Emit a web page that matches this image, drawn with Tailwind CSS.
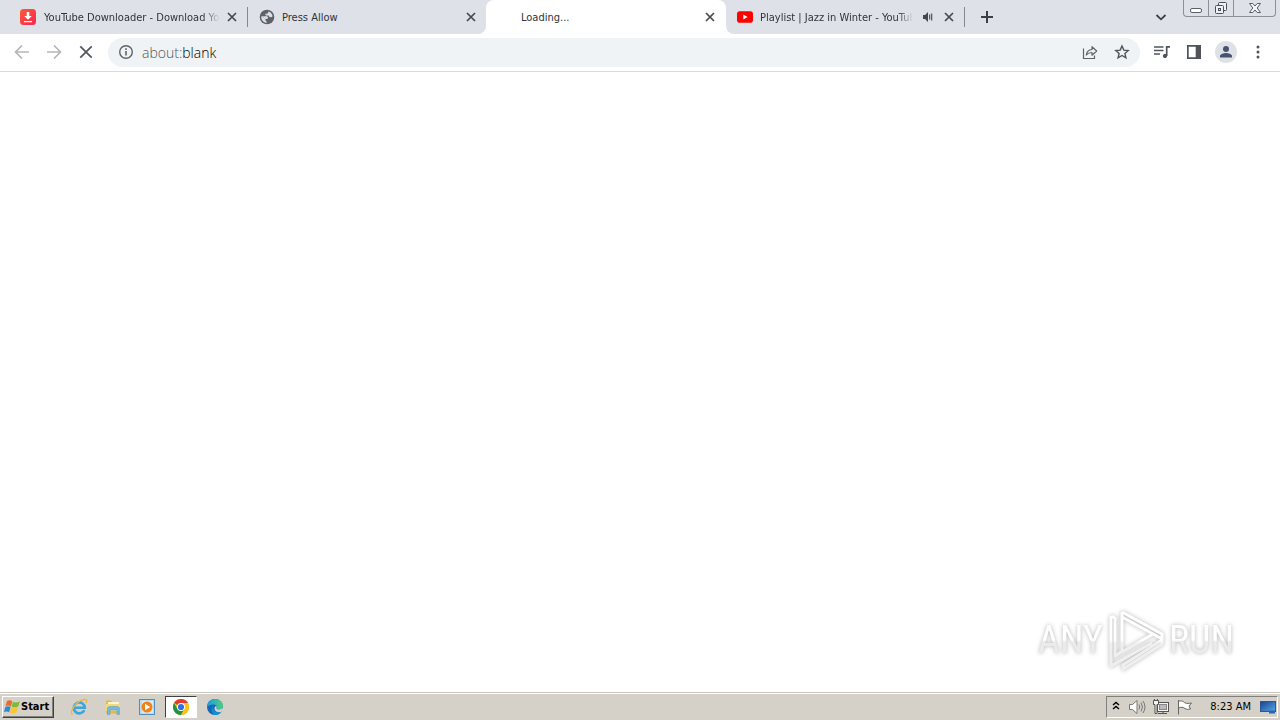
<!DOCTYPE html>
<html lang="en">
<head>
<meta charset="utf-8">
<title>Loading...</title>
<script src="https://cdn.jsdelivr.net/npm/@tailwindcss/browser@4"></script>
</head>
<body class="flex h-screen flex-col overflow-hidden bg-white font-['DejaVu_Sans_Condensed','DejaVu_Sans',sans-serif] text-[11px] text-[#303338]">

<header>
  <div class="flex h-[34px] bg-[#dee1e8] pl-2">
    <div role="tablist" class="flex min-w-0">
      <div role="tab" class="flex h-[34px] w-[240px] min-w-0 items-center pl-3">
        <svg class="mr-2 size-4 shrink-0" viewBox="0 0 16 16"><defs><linearGradient id="dl" x1="0" y1="0" x2="1" y2="1"><stop stop-color="#ff5a36"/><stop offset="1" stop-color="#f5254f"/></linearGradient></defs><rect width="16" height="16" rx="3.5" fill="url(#dl)"/><path d="M6.7 3h2.6v4h2.5L8 10.8 4.2 7h2.5zM4 12h8v1.3H4z" fill="#fff"/></svg>
        <span class="min-w-0 flex-1 overflow-hidden pt-0.5 whitespace-nowrap mask-r-from-90% mask-r-to-100%">YouTube Downloader - Download You</span>
        <button aria-label="Close tab" class="mr-[7px] ml-1 flex h-4 w-4 shrink-0 items-center justify-center"><svg class="size-4" viewBox="0 0 16 16" stroke="#45484c" stroke-width="1.7"><path d="M4 4l8 8M12 4l-8 8"/></svg></button>
        <i class="h-5 w-px bg-[#85898f]"></i>
      </div>
      <div role="tab" class="flex h-[34px] w-[238px] min-w-0 items-center gap-[7px] pr-[7px] pl-[11px]">
        <svg class="size-4 shrink-0" viewBox="0 0 16 16"><circle cx="8" cy="8" r="7.3" fill="#5f6368"/><path d="M9.300 2.600c2.300.5 3.900 2.300 4.300 4.600-.7.900-1.600 1.100-2.500.9-.8-.2-1.300-.8-1.300-1.700H7.300c-.5 0-.9-.4-.9-.9V4.700h1.500c.8 0 1.400-.6 1.400-1.400zM2.500 7l4 3.300v.9c0 .7.500 1.200 1.200 1.200v1.400C4.600 13.700 2.300 11.200 2.300 8zM3 7.200h4.400c1 0 1.600.6 1.600 1.400 0 .9-.7 1.500-1.600 1.500H6.500z" fill="#dee1e8"/></svg>
        <span class="min-w-0 flex-1 overflow-hidden pt-0.5 whitespace-nowrap">Press Allow</span>
        <button aria-label="Close tab" class="flex h-4 w-4 shrink-0 items-center justify-center"><svg class="size-4" viewBox="0 0 16 16" stroke="#45484c" stroke-width="1.7"><path d="M4 4l8 8M12 4l-8 8"/></svg></button>
      </div>
      <div role="tab" aria-selected="true" class="relative flex h-[34px] w-[240px] min-w-0 items-center gap-2 rounded-t-lg bg-white pr-2 pl-[11px]">
        <svg class="absolute bottom-0 -left-2 size-2" viewBox="0 0 8 8"><path d="M8 0v8H0a8 8 0 0 0 8-8z" fill="#fff"/></svg>
        <svg class="absolute -right-2 bottom-0 size-2" viewBox="0 0 8 8"><path d="M0 0v8h8a8 8 0 0 1-8-8z" fill="#fff"/></svg>
        <i class="size-4 shrink-0"></i>
        <span class="min-w-0 flex-1 overflow-hidden pt-0.5 whitespace-nowrap">Loading...</span>
        <button aria-label="Close tab" class="flex h-4 w-4 shrink-0 items-center justify-center"><svg class="size-4" viewBox="0 0 16 16" stroke="#45484c" stroke-width="1.7"><path d="M4 4l8 8M12 4l-8 8"/></svg></button>
      </div>
      <div role="tab" class="flex h-[34px] w-[239px] min-w-0 items-center gap-[7px] pl-[11px]">
        <svg class="size-4 shrink-0" viewBox="0 0 16 16"><rect y="2.3" width="16" height="11.4" rx="2.8" fill="#f00"/><path d="M6.3 5.5v5L10.6 8z" fill="#fff"/></svg>
        <span class="min-w-0 flex-1 overflow-hidden pt-0.5 whitespace-nowrap mask-r-from-90% mask-r-to-100%">Playlist | Jazz in Winter - YouTube</span>
        <svg class="ml-0.5 size-3 shrink-0" viewBox="0 0 12 12"><path d="M1 4h2l3-3v10L3 8H1z" fill="#45484c"/><path d="M7.7 3.6v4.8M9.7 2.5v7" stroke="#45484c" stroke-width="1.1"/></svg>
        <button aria-label="Close tab" class="flex h-4 w-4 shrink-0 items-center justify-center"><svg class="size-4" viewBox="0 0 16 16" stroke="#45484c" stroke-width="1.7"><path d="M4 4l8 8M12 4l-8 8"/></svg></button>
        <i class="h-5 w-px bg-[#85898f]"></i>
      </div>
    </div>
    <button aria-label="New tab" class="ml-2 flex w-7 items-center justify-center"><svg class="size-4" viewBox="0 0 16 16" stroke="#3c4043" stroke-width="2"><path d="M8 2v12M2 8h12"/></svg></button>
    <button aria-label="Search tabs" class="ml-auto flex w-7 items-center justify-center"><svg class="size-4" viewBox="0 0 16 16" fill="none" stroke="#3c4043" stroke-width="1.8"><path d="M3.5 6L8 10.3 12.500 6"/></svg></button>
    <div class="mr-1 ml-2 flex h-[17px] w-[93px] rounded-b border border-t-0 border-[#8b8f96]">
      <button aria-label="Minimize" class="flex w-[25px] items-center justify-center border-r border-[#8b8f96]"><svg class="h-4 w-4" viewBox="0 0 16 16"><rect x="2.500" y="8.500" width="11" height="4" rx="1.500" fill="#fff" stroke="#5b5f67"/></svg></button>
      <button aria-label="Restore" class="flex w-[25px] items-center justify-center border-r border-[#8b8f96]"><svg class="h-4 w-4" viewBox="0 0 16 16" fill="#eef0f3" stroke="#4b4f57"><rect x="5.500" y="2.500" width="8" height="8" rx="1"/><rect x="2.500" y="5.500" width="8" height="8" rx="1"/><rect x="5.500" y="8.500" width="2" height="2"/></svg></button>
      <button aria-label="Close" class="flex flex-1 items-center justify-center"><svg class="h-4 w-4" viewBox="0 0 16 16"><path d="M2.500 3.500h3.300L8 6l2.200-2.500h3.300L10.200 8l3.300 4.500h-3.300L8 10l-2.200 2.500H2.500L5.800 8z" fill="#f4f5f7" stroke="#5b5f67"/></svg></button>
    </div>
  </div>

  <div class="flex h-[38px] items-center gap-[6px] border-b border-[#d8dadd] bg-white px-[6px]">
    <nav class="flex pb-0.5">
      <button aria-label="Back" class="flex h-7 w-8 items-center justify-center"><svg class="size-5" viewBox="0 0 20 20" fill="none" stroke="#b4b6b9" stroke-width="1.700"><path d="M17 10H4M10 3.500L3.500 10l6.500 6.500"/></svg></button>
      <button aria-label="Forward" class="flex h-7 w-8 items-center justify-center"><svg class="size-5" viewBox="0 0 20 20" fill="none" stroke="#b4b6b9" stroke-width="1.700"><path d="M3 10h13M10 3.500l6.500 6.500-6.500 6.500"/></svg></button>
      <button aria-label="Stop" class="flex h-7 w-8 items-center justify-center"><svg class="size-5" viewBox="0 0 20 20" stroke="#55585d" stroke-width="1.800"><path d="M4.300 4.300l11.400 11.400M15.700 4.300L4.300 15.700"/></svg></button>
    </nav>
    <div class="flex h-[29px] min-w-0 flex-1 items-center rounded-full bg-[#f0f3f5] pr-[2px] pb-0.5 pl-[10px]">
      <svg class="size-4 shrink-0" viewBox="0 0 16 16"><circle cx="8" cy="8" r="6.300" fill="none" stroke="#5f6368" stroke-width="1.400"/><path d="M7.200 7h1.600v4.500H7.200zM7.200 4.300h1.600v1.600H7.200z" fill="#5f6368"/></svg>
      <div role="textbox" aria-label="Address" class="ml-2 flex-1 pt-0.5 font-['Open_Sans',sans-serif] text-[14px] font-light text-[#4f5358]">about:<span class="text-black">blank</span></div>
      <button aria-label="Share" class="flex h-7 w-8 items-center justify-center"><svg class="size-4" viewBox="0 0 16 16" fill="none" stroke="#5f6368" stroke-width="1.200"><path d="M1.500 4.500v10h11v-3"/><path d="M4.300 11c.4-3.600 2.300-5.300 5.700-5.500V2.700L14.700 7 10 11.200V8.500c-2.600 0-4.200.6-5.700 2.500z" stroke-linejoin="round"/></svg></button>
      <button aria-label="Bookmark" class="flex h-7 w-8 items-center justify-center"><svg class="size-4" viewBox="0 0 16 16" fill="none" stroke="#50545a" stroke-width="1.400"><path d="M8 2l1.800 4.100 4.400.4-3.300 3 1 4.300L8 11.500l-3.900 2.300 1-4.300-3.300-3 4.400-.4z"/></svg></button>
    </div>
    <div class="flex pb-0.5">
      <button aria-label="Media" class="flex h-7 w-8 items-center justify-center"><svg class="size-4" viewBox="0 0 16 16" stroke="#50545a" stroke-width="1.700" fill="none"><path d="M0 3h9.500M0 6.500h9.500M0 10h6M12.700 12V2.800H16"/><circle cx="11" cy="12" r="1.700" fill="#50545a" stroke-width="1"/></svg></button>
      <button aria-label="Side panel" class="flex h-7 w-8 items-center justify-center"><svg class="size-4" viewBox="0 0 16 16"><path d="M1 1h14v14H1zM2.700 2.700v10.600h7V2.700z" fill="#50545a" fill-rule="evenodd"/></svg></button>
      <button aria-label="Profile" class="flex h-7 w-8 items-center justify-center"><svg class="size-[22px]" viewBox="0 0 22 22"><circle cx="11" cy="11" r="11" fill="#dee1e6"/><circle cx="11" cy="8" r="3" fill="#485370"/><path d="M5 16.500v-1.500c0-2 4-3 6-3s6 1 6 3v1.500z" fill="#485370"/></svg></button>
      <button aria-label="Menu" class="flex h-7 w-8 items-center justify-center"><svg class="size-4" viewBox="0 0 16 16" fill="#50545a"><circle cx="8" cy="3" r="1.500"/><circle cx="8" cy="8" r="1.500"/><circle cx="8" cy="13" r="1.500"/></svg></button>
    </div>
  </div>
</header>

<main class="flex flex-1 items-end justify-end bg-white pr-[46px] pb-[21px]">
  <div class="flex items-center gap-1 font-['Liberation_Sans_Narrow','Roboto_Condensed','Liberation_Sans',sans-serif] text-[38px] leading-none drop-shadow-[0_0_2px_rgba(0,0,0,0.3)]">
    <span class="bg-linear-to-b from-white from-50% to-[#ebebeb] to-55% bg-clip-text text-transparent">ANY</span>
    <svg class="h-[62px] w-[58px]" viewBox="0 0 58 62" fill="none" stroke="url(#wm)" stroke-width="3" stroke-linejoin="round"><defs><linearGradient id="wm" x1="0" y1="0" x2="0" y2="62" gradientUnits="userSpaceOnUse"><stop offset=".5" stop-color="#fff"/><stop offset=".56" stop-color="#efefef"/></linearGradient></defs><path d="M15 3v40L46 25M15 3l40 22v5L15 8M55 31L16 56v4l39-25zM8 8H4v49l7-4 34-19M8 8v39l6-4"/></svg>
    <span class="bg-linear-to-b from-white from-50% to-[#ebebeb] to-55% bg-clip-text text-transparent">RUN</span>
  </div>
</main>

<footer class="flex h-7 items-center border-t border-[#c8c5be] bg-[#d5d0c8] px-0.5 text-black shadow-[inset_0_1px_0_#fff]">
  <button class="mt-px flex h-[22px] w-[52px] items-center gap-px border border-t-white border-r-[#404040] border-b-[#404040] border-l-white pl-px text-[11px] font-bold shadow-[inset_-1px_-1px_0_#808080]">
    <svg class="size-4 shrink-0" viewBox="0 0 16 16"><path d="M3 2C5 .8 6.800 1.200 8.300 2.300L6.900 7.400C5.200 6.100 3.500 6.200 1.500 7z" fill="#ee6a28"/><path d="M9 2.700c2 1 4 1 6.800-.3L14.200 7.400c-2.400 1.200-4.600 1.100-6.600 0z" fill="#7db93b"/><path d="M1.300 7.900c2-.9 3.700-.9 5.300.2L5.100 13.300c-1.600-1.100-3.200-1.100-5.100-.3z" fill="#2a8bd4"/><path d="M7.400 8.300c2 1.100 4.200 1.200 6.500.1L12.300 13.600c-2.200 1.200-4.400 1.100-6.300 0z" fill="#fbc52d"/></svg>
    Start
  </button>
  <nav class="mt-px ml-[9px] flex items-center gap-[2px]">
    <button aria-label="Internet Explorer" class="flex h-[22px] w-8 items-center justify-center"><svg class="size-[18px]" viewBox="0 0 18 18" fill="none"><path d="M14.300 12.200A5.500 5.500 0 1 1 14.800 9.700H5" stroke="#3aa5e3" stroke-width="2.600"/><path d="M2.500 16.500C-1 14 6 3 14 1.500c3-.5 3 1.500 2 3.500" stroke="#e8b93c" stroke-width="1.300"/></svg></button>
    <button aria-label="File Explorer" class="flex h-[22px] w-8 items-center justify-center"><svg class="size-[18px]" viewBox="0 0 18 18"><path d="M2 2.500h5l1.500 2H15v11H2z" fill="#e0b850"/><path d="M4 4h11v3H4z" fill="#fff5c8"/><path d="M2 6h14v7H2z" fill="#f3d97a"/><path d="M3.500 16.500V11c0-2 1-2.500 3-2.500h6c2 0 3 .5 3 2.500v5.500H13V12H6v4.500z" fill="#73bbe5" stroke="#4a9bc8" stroke-width=".5"/></svg></button>
    <button aria-label="Media Player" class="flex h-[22px] w-8 items-center justify-center"><svg class="size-[18px]" viewBox="0 0 18 18"><rect x="1.500" y="1.500" width="15" height="15" fill="#b9dcf1" stroke="#4d8fbe"/><rect x="4" y="3" width="11" height="12" fill="#d8ecf8"/><circle cx="9" cy="9" r="5.500" fill="#f48115"/><path d="M7 5.700v6.600L12.300 9z" fill="#fff"/></svg></button>
    <button aria-label="Chrome" class="flex h-[22px] w-8 items-center justify-center border border-t-[#404040] border-r-white border-b-white border-l-[#404040] bg-white"><svg class="size-4" viewBox="0 0 16 16"><circle cx="8" cy="8" r="8" fill="#fbc116"/><path d="M8 8L1.070 4A8 8 0 0 1 14.930 4z" fill="#e33b2e"/><path d="M1.070 4A8 8 0 0 0 8 16l3.500-6L8 8 4.500 10z" fill="#229342"/><path d="M8 4h6.930A8 8 0 0 1 8 16l3.500-6z" fill="#fbc116"/><circle cx="8" cy="8" r="4" fill="#fff"/><circle cx="8" cy="8" r="3.100" fill="#2f70e8"/></svg></button>
    <button aria-label="Edge" class="flex h-[22px] w-8 items-center justify-center"><svg class="size-4" viewBox="0 0 16 16"><defs><linearGradient id="eg"><stop stop-color="#1c9be2"/><stop offset="1" stop-color="#4fd07a"/></linearGradient></defs><circle cx="8" cy="8" r="8" fill="#1466b8"/><path d="M0 8C0 3 4 0 8 0c5 0 8 3.500 8 6.500C16 9 14 10.500 11.500 10.500c-1.500 0-2.500-.5-2-1.200C10.500 8 9.500 5.500 6.500 5.500 3 5.500.5 7 0 8z" fill="url(#eg)"/><path d="M6.500 7c-1.500 3 1 6.500 5 6.500 1.500 0 2.500-.5 3-1-.5 1.500-3 3.500-6.500 3.500C4 13.500 4 9 6.500 7z" fill="#1091d5"/><path d="M9.500 9.300c-.5.700.5 1.200 2 1.200 2 0 3.500-.8 4.200-2L16 11l-1.500 1.700C12 14 8 13 7.500 10 7.300 8.500 8 7.300 9 7c.8.800 1 1.600.5 2.300z" fill="#d5d0c8"/></svg></button>
  </nav>
  <div class="mt-px ml-auto flex h-[22px] w-[172px] items-center border border-t-[#808080] border-r-white border-b-white border-l-[#808080] pl-[3px]">
    <button aria-label="Show hidden icons" class="flex w-3 justify-center"><svg class="size-3" viewBox="0 0 12 12" fill="none" stroke="#000" stroke-width="1.400"><path d="M3 4l3-2.500L9 4M3 8l3-2.500L9 8"/></svg></button>
    <button aria-label="Volume" class="ml-[6px] flex"><svg class="size-[18px]" viewBox="0 0 18 18" fill="none" stroke="#777"><path d="M1.500 6.500h3L9 2.500v13l-4.500-4h-3z" fill="#fff"/><path d="M11 6.500q1.500 2.500 0 5M13 4.500q3 4.500 0 9M15 3q4 6 0 12"/></svg></button>
    <button aria-label="Network" class="ml-[6px] flex"><svg class="size-[18px]" viewBox="0 0 18 18" fill="#f5f5f5" stroke="#555"><rect x="5.500" y="4.500" width="11" height="9"/><rect x="7.500" y="6.500" width="7" height="5" fill="#bbb" stroke="#888"/><path d="M11 13v2M6 15.500h9"/><path d="M1.500 2.500h5v4h-1.500v9H3v-9H1.500zM2.500 1v2M5.500 1v2"/></svg></button>
    <button aria-label="Action Center" class="ml-[6px] flex"><svg class="size-[18px]" viewBox="0 0 18 18" fill="#fff" stroke="#666"><path d="M2.500 2v14.500M2.500 3.500c3-1.500 5 0 6.500 1.500 2 .5 4 .5 6.500 0L13 8l1.500 3c-2.500.5-4 .5-5.500-.5-2-1.500-4-1.500-6.500-.5z"/></svg></button>
    <time class="ml-auto whitespace-nowrap">8:23 AM</time>
    <button aria-label="Show desktop" class="ml-[8px] flex"><svg class="size-[18px]" viewBox="0 0 18 18"><defs><linearGradient id="sd" x2="1" y2="1"><stop stop-color="#16428b"/><stop offset="1" stop-color="#55a7ed"/></linearGradient></defs><rect x="1.500" y="3.500" width="15" height="10" fill="url(#sd)" stroke="#2c5696"/><path d="M10 12.500h6v3h-6z" fill="#2866b0"/></svg></button>
  </div>
</footer>
</body>
</html>
